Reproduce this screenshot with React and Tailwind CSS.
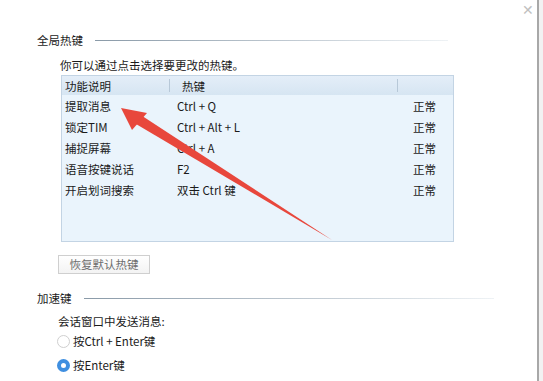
import React from 'react';

const font = { fontFamily: '"Noto Sans CJK SC", "Liberation Sans", sans-serif' };

const rows = [
  ['提取消息', 'Ctrl + Q'],
  ['锁定TIM', 'Ctrl + Alt + L'],
  ['捕捉屏幕', 'Ctrl + A'],
  ['语音按键说话', 'F2'],
  ['开启划词搜索', '双击 Ctrl 键'],
];

const SectionTitle = ({ children, lineClass }) => (
  <div className="flex items-center h-4">
    <span>{children}</span>
    <div className={`h-px ml-3 bg-gradient-to-r from-[#8a9aa8] to-[#eef2f5] ${lineClass}`} />
  </div>
);

const Arrow = () => (
  <svg className="absolute left-0 top-0 pointer-events-none" width="543" height="381">
    <polygon points="121,108 132,130 147,113" fill="#e8473c" />
    <polygon points="136,124 141.5,115.5 332,240" fill="#e8473c" />
  </svg>
);

const App = () => {
  return (
    <div className="relative w-[543px] h-[381px] bg-white overflow-hidden text-[11.5px] text-[#1b1b1b]" style={font}>
      <div className="absolute right-[4px] top-0 h-full w-[2px] bg-[#a8a8a8]" />
      <div className="absolute right-0 top-0 h-full w-[4px] bg-[#f2f2f2]" />
      <div className="absolute left-[522px] top-[2px] text-[#c0c0c0] text-[14px] leading-none">✕</div>

      <div className="pl-[37px] pt-[32px] leading-4">
        <SectionTitle lineClass="w-[353px]">全局热键</SectionTitle>

        <div className="pl-[23px] mt-[9px]">你可以通过点击选择要更改的热键。</div>

        <div className="ml-[24px] mt-[2px] w-[393px] h-[167px] border border-[#c3d4e4] bg-[#eaf4fc]">
          <div className="flex h-[19px] items-center bg-gradient-to-b from-[#e4eef8] to-[#d6e5f2]">
            <div className="w-[108px] pl-[3px] flex items-center justify-between">
              <span>功能说明</span>
              <span className="w-px h-[13px] bg-[#b7c8d8]" />
            </div>
            <div className="w-[228px] pl-[12px] flex items-center justify-between">
              <span>热键</span>
              <span className="w-px h-[13px] bg-[#b7c8d8]" />
            </div>
          </div>
          {rows.map(([name, key]) => (
            <div key={name} className="flex h-[21px] items-center">
              <div className="w-[115px] pl-[3px]">{name}</div>
              <div className="w-[236px]">{key}</div>
              <div>正常</div>
            </div>
          ))}
        </div>

        <button className="ml-[21px] mt-[13px] h-[19px] w-[92px] border border-[#cfcfcf] bg-gradient-to-b from-white to-[#f3f3f3] text-[#6d6d6d] leading-none">
          恢复默认热键
        </button>

        <div className="mt-[16px]">
          <SectionTitle lineClass="w-[410px]">加速键</SectionTitle>
        </div>

        <div className="pl-[21px] mt-[7px]">会话窗口中发送消息:</div>

        <div className="pl-[20px] mt-[2px] h-5 flex items-center">
          <span className="w-[13px] h-[13px] rounded-full border border-[#cfcfcf] bg-white" />
          <span className="ml-[3px]">按Ctrl + Enter键</span>
        </div>
        <div className="pl-[20px] mt-[4px] h-5 flex items-center">
          <span className="w-[13px] h-[13px] rounded-full border-[4px] border-[#3f8fe0] bg-white" />
          <span className="ml-[3px]">按Enter键</span>
        </div>
      </div>

      <Arrow />
    </div>
  );
};

export default App;
